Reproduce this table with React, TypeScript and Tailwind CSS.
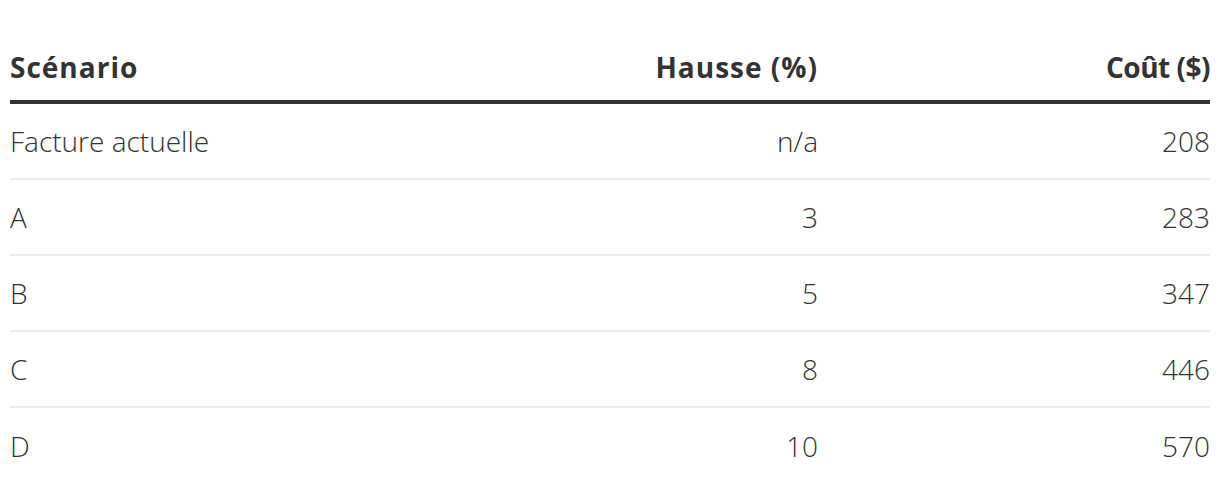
import React from "react";

const rows = [
  ["Facture actuelle", "n/a", "208"],
  ["A", "3", "283"],
  ["B", "5", "347"],
  ["C", "8", "446"],
  ["D", "10", "570"],
];

export default function App() {
  return (
    <div className="w-[1220px] h-[492px] bg-white px-[10px] pt-[34px]" style={{ fontFamily: '"Open Sans", sans-serif' }}>
      <div className="grid grid-cols-[1fr_400px_392px] text-[28px] text-[#333333]">
        <div className="h-[66px] flex items-center font-bold tracking-[1px]">Scénario</div>
        <div className="h-[66px] flex items-center justify-end font-bold tracking-[1px]">Hausse (%)</div>
        <div className="h-[66px] flex items-center justify-end font-bold tracking-[-0.5px]">Coût ($)</div>
        <div className="col-span-3 h-[4px] bg-[#333333]"></div>
        {rows.map((r, i) => (
          <React.Fragment key={i}>
            <div className={`h-[76px] flex items-center font-light ${i < rows.length - 1 ? "border-b-2 border-[#ebebeb]" : ""}`}>{r[0]}</div>
            <div className={`h-[76px] flex items-center justify-end font-light ${i < rows.length - 1 ? "border-b-2 border-[#ebebeb]" : ""}`}>{r[1]}</div>
            <div className={`h-[76px] flex items-center justify-end font-light ${i < rows.length - 1 ? "border-b-2 border-[#ebebeb]" : ""}`}>{r[2]}</div>
          </React.Fragment>
        ))}
      </div>
    </div>
  );
}
